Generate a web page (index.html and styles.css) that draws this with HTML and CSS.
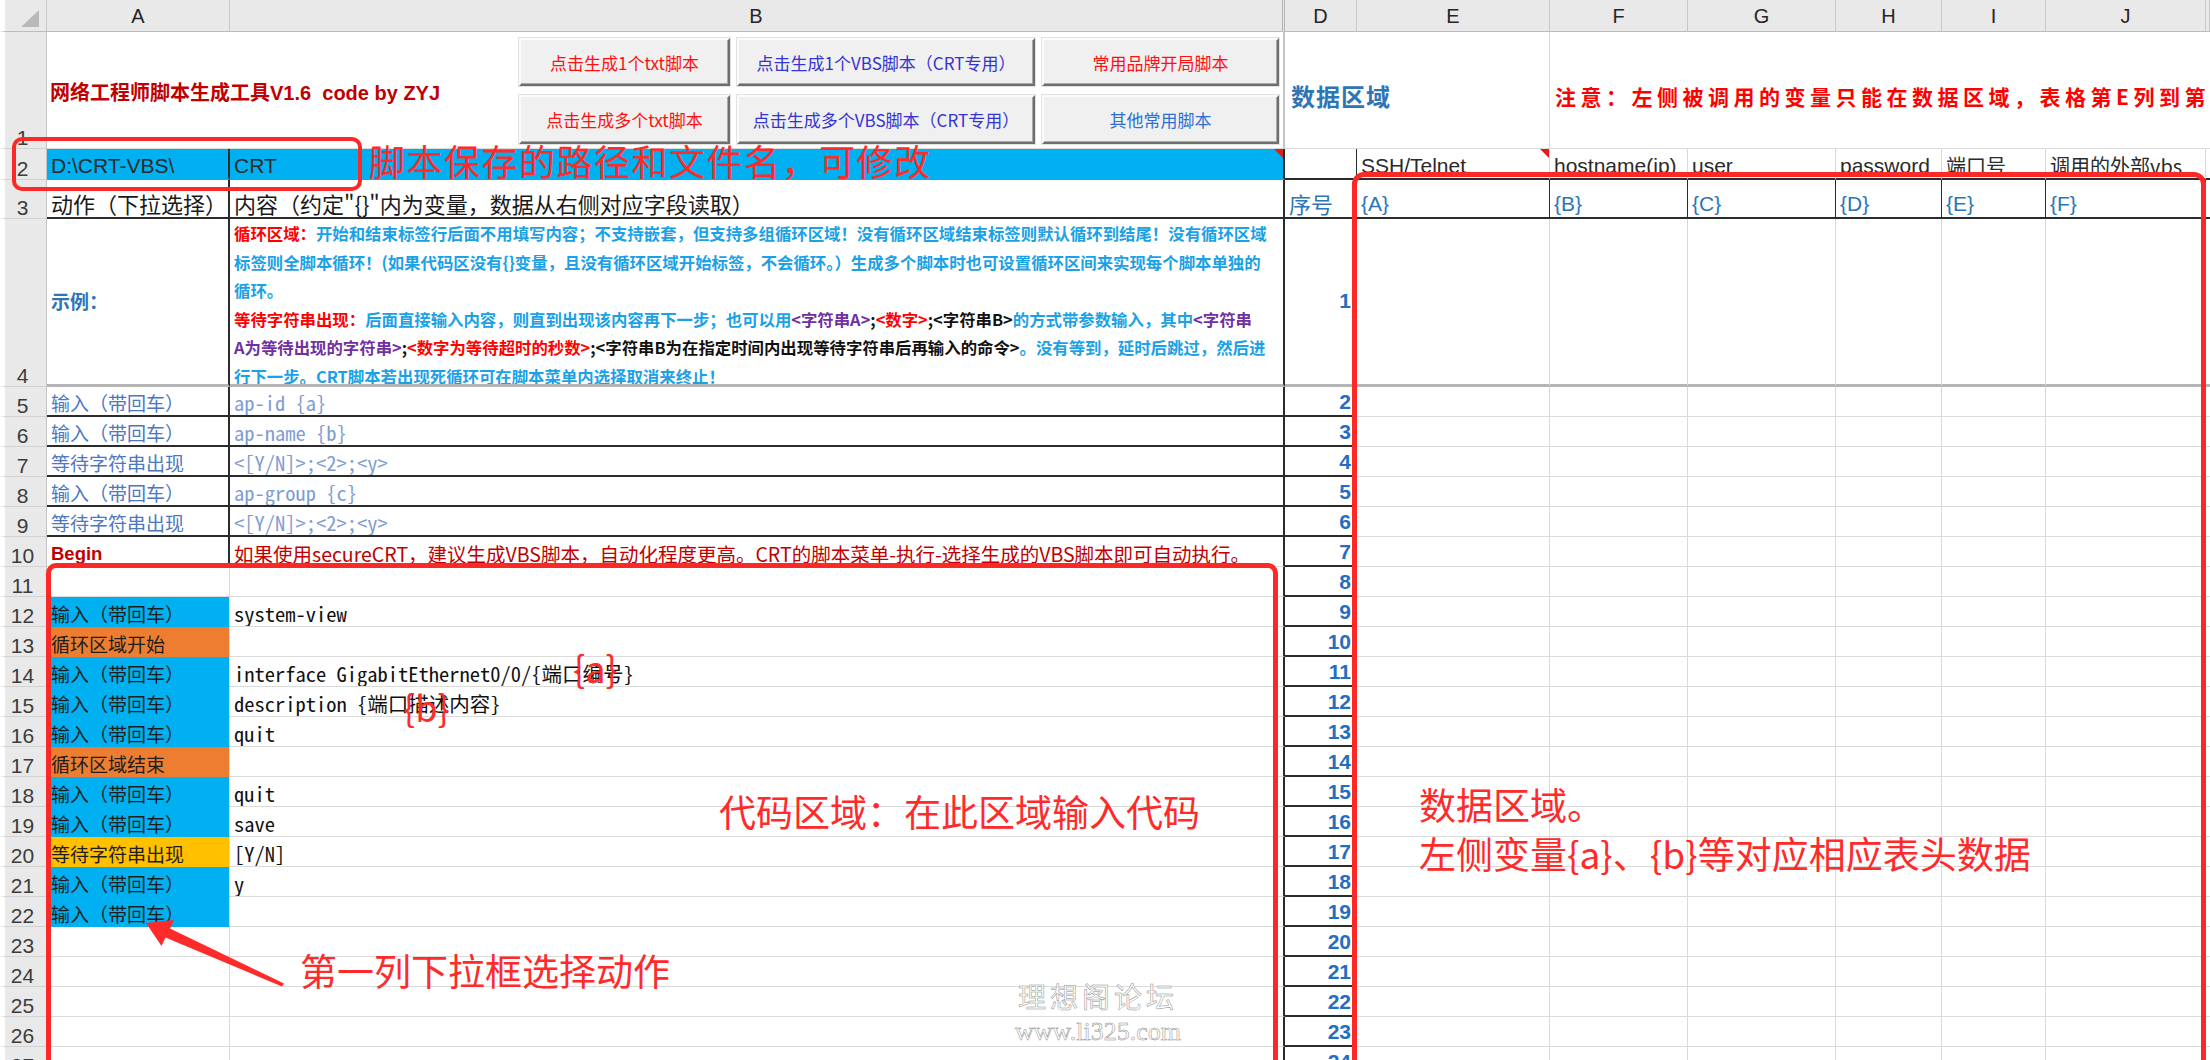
FILE: index.html
```html
<!DOCTYPE html>
<html lang="zh-CN">
<head>
<meta charset="utf-8">
<title>网络工程师脚本生成工具V1.6</title>
<link rel="stylesheet" href="styles.css">
</head>
<body>
<div class="sheet">
  <div class="row hdr">
    <div class="corner"></div><div>A</div><div class="hb">B</div><div>D</div><div>E</div><div>F</div><div>G</div><div>H</div><div>I</div><div>J</div><div></div>
  </div>

  <div class="row r1">
    <div class="rh">1</div>
    <div class="head-cell">
      <span class="title">网络工程师脚本生成工具V1.6&nbsp; code by ZYJ</span>
      <div class="btns">
        <div class="btn red">点击生成1个txt脚本</div>
        <div class="btn violet">点击生成1个VBS脚本（CRT专用）</div>
        <div class="btn red">常用品牌开局脚本</div>
        <div class="btn red">点击生成多个txt脚本</div>
        <div class="btn violet">点击生成多个VBS脚本（CRT专用）</div>
        <div class="btn blue-t">其他常用脚本</div>
      </div>
    </div>
    <div class="zone">数据区域</div>
    <div class="notice">注意：左侧被调用的变量只能在数据区域，表格第E列到第Z列之间，否则无法读取</div>
  </div>

  <div class="row r2">
    <div class="rh">2</div>
    <div class="a kr fill-blue">D:\CRT-VBS\</div>
    <div class="b fill-blue cm">CRT</div>
    <div class="d"></div>
    <div class="cm">SSH/Telnet</div><div>hostname(ip)</div><div>user</div><div>password</div><div class="cjk">端口号</div><div class="cjk">调用的外部vbs</div><div></div>
  </div>

  <div class="row r3">
    <div class="rh">3</div>
    <div class="a">动作（下拉选择）</div>
    <div class="b">内容（约定"{}"内为变量，数据从右侧对应字段读取）</div>
    <div class="d">序号</div>
    <div class="v">{A}</div><div class="v">{B}</div><div class="v">{C}</div><div class="v">{D}</div><div class="v">{E}</div><div class="v">{F}</div><div></div>
  </div>

  <div class="row r4">
    <div class="rh">4</div>
    <div class="a kr eg">示例：</div>
    <div class="b guide"><span class="g-red">循环区域：</span><span class="g-blue">开始和结束标签行后面不用填写内容；不支持嵌套，但支持多组循环区域！没有循环区域结束标签则默认循环到结尾！没有循环区域</span><br><span class="g-blue">标签则全脚本循环！(如果代码区没有{}变量，且没有循环区域开始标签，不会循环。）生成多个脚本时也可设置循环区间来实现每个脚本单独的</span><br><span class="g-blue">循环。</span><br><span class="g-red">等待字符串出现：</span><span class="g-blue">后面直接输入内容，则直到出现该内容再下一步；也可以用</span><span class="g-purple">&lt;字符串A&gt;</span><span class="g-black">;</span><span class="g-red">&lt;数字&gt;</span><span class="g-black">;&lt;字符串B&gt;</span><span class="g-blue">的方式带参数输入，其中</span><span class="g-purple">&lt;字符串</span><br><span class="g-purple">A为等待出现的字符串&gt;</span><span class="g-black">;</span><span class="g-red">&lt;数字为等待超时的秒数&gt;</span><span class="g-black">;&lt;字符串B为在指定时间内出现等待字符串后再输入的命令&gt;</span><span class="g-blue">。没有等到，延时后跳过，然后进</span><br><span class="g-blue">行下一步。CRT脚本若出现死循环可在脚本菜单内选择取消来终止！</span></div>
    <div class="d">1</div>
    <div></div><div></div><div></div><div></div><div></div><div></div><div></div>
  </div>

  <div class="row ex"><div class="rh">5</div><div class="a act">输入（带回车）</div><div class="b sample">ap-id {a}</div><div class="d">2</div><div></div><div></div><div></div><div></div><div></div><div></div><div></div></div>
  <div class="row ex"><div class="rh">6</div><div class="a act">输入（带回车）</div><div class="b sample">ap-name {b}</div><div class="d">3</div><div></div><div></div><div></div><div></div><div></div><div></div><div></div></div>
  <div class="row ex"><div class="rh">7</div><div class="a act">等待字符串出现</div><div class="b sample">&lt;[Y/N]&gt;;&lt;2&gt;;&lt;y&gt;</div><div class="d">4</div><div></div><div></div><div></div><div></div><div></div><div></div><div></div></div>
  <div class="row ex"><div class="rh">8</div><div class="a act">输入（带回车）</div><div class="b sample">ap-group {c}</div><div class="d">5</div><div></div><div></div><div></div><div></div><div></div><div></div><div></div></div>
  <div class="row ex"><div class="rh">9</div><div class="a act">等待字符串出现</div><div class="b sample">&lt;[Y/N]&gt;;&lt;2&gt;;&lt;y&gt;</div><div class="d">6</div><div></div><div></div><div></div><div></div><div></div><div></div><div></div></div>
  <div class="row"><div class="rh">10</div><div class="a kr begin">Begin</div><div class="b begin-note">如果使用secureCRT，建议生成VBS脚本，自动化程度更高。CRT的脚本菜单-执行-选择生成的VBS脚本即可自动执行。</div><div class="d">7</div><div></div><div></div><div></div><div></div><div></div><div></div><div></div></div>
  <div class="row"><div class="rh">11</div><div class="a"></div><div class="b"></div><div class="d">8</div><div></div><div></div><div></div><div></div><div></div><div></div><div></div></div>
  <div class="row"><div class="rh">12</div><div class="a fill-blue">输入（带回车）</div><div class="b code">system-view</div><div class="d">9</div><div></div><div></div><div></div><div></div><div></div><div></div><div></div></div>
  <div class="row"><div class="rh">13</div><div class="a fill-orange">循环区域开始</div><div class="b code"></div><div class="d">10</div><div></div><div></div><div></div><div></div><div></div><div></div><div></div></div>
  <div class="row"><div class="rh">14</div><div class="a fill-blue">输入（带回车）</div><div class="b code">interface GigabitEthernet0/0/{端口编号}</div><div class="d">11</div><div></div><div></div><div></div><div></div><div></div><div></div><div></div></div>
  <div class="row"><div class="rh">15</div><div class="a fill-blue">输入（带回车）</div><div class="b code">description {端口描述内容}</div><div class="d">12</div><div></div><div></div><div></div><div></div><div></div><div></div><div></div></div>
  <div class="row"><div class="rh">16</div><div class="a fill-blue">输入（带回车）</div><div class="b code">quit</div><div class="d">13</div><div></div><div></div><div></div><div></div><div></div><div></div><div></div></div>
  <div class="row"><div class="rh">17</div><div class="a fill-orange">循环区域结束</div><div class="b code"></div><div class="d">14</div><div></div><div></div><div></div><div></div><div></div><div></div><div></div></div>
  <div class="row"><div class="rh">18</div><div class="a fill-blue">输入（带回车）</div><div class="b code">quit</div><div class="d">15</div><div></div><div></div><div></div><div></div><div></div><div></div><div></div></div>
  <div class="row"><div class="rh">19</div><div class="a fill-blue">输入（带回车）</div><div class="b code">save</div><div class="d">16</div><div></div><div></div><div></div><div></div><div></div><div></div><div></div></div>
  <div class="row"><div class="rh">20</div><div class="a fill-gold">等待字符串出现</div><div class="b code">[Y/N]</div><div class="d">17</div><div></div><div></div><div></div><div></div><div></div><div></div><div></div></div>
  <div class="row"><div class="rh">21</div><div class="a fill-blue">输入（带回车）</div><div class="b code">y</div><div class="d">18</div><div></div><div></div><div></div><div></div><div></div><div></div><div></div></div>
  <div class="row"><div class="rh">22</div><div class="a fill-blue">输入（带回车）</div><div class="b code"></div><div class="d">19</div><div></div><div></div><div></div><div></div><div></div><div></div><div></div></div>
  <div class="row"><div class="rh">23</div><div class="a"></div><div class="b"></div><div class="d">20</div><div></div><div></div><div></div><div></div><div></div><div></div><div></div></div>
  <div class="row"><div class="rh">24</div><div class="a"></div><div class="b"></div><div class="d">21</div><div></div><div></div><div></div><div></div><div></div><div></div><div></div></div>
  <div class="row"><div class="rh">25</div><div class="a"></div><div class="b"></div><div class="d">22</div><div></div><div></div><div></div><div></div><div></div><div></div><div></div></div>
  <div class="row"><div class="rh">26</div><div class="a"></div><div class="b"></div><div class="d">23</div><div></div><div></div><div></div><div></div><div></div><div></div><div></div></div>
  <div class="row"><div class="rh">27</div><div class="a"></div><div class="b"></div><div class="d">24</div><div></div><div></div><div></div><div></div><div></div><div></div><div></div></div>
</div>

<div class="marks">
  <div class="frame path"></div>
  <div class="frame code-area"></div>
  <div class="frame data-area"></div>
  <span class="tag path-tip">脚本保存的路径和文件名，可修改</span>
  <span class="tag var-a">{a}</span>
  <span class="tag var-b">{b}</span>
  <span class="tag code-tip">代码区域：在此区域输入代码</span>
  <span class="tag data-tip">数据区域。<br>左侧变量{a}、{b}等对应相应表头数据</span>
  <span class="tag col-tip">第一列下拉框选择动作</span>
  <svg class="arrow" width="2210" height="1060" viewBox="0 0 2210 1060">
    <polygon points="146,923 174,920 170,928.5 284,983.5 282,986.5 165.5,937.5 161.5,946"/>
  </svg>
  <div class="wm"><span class="wm-cn">理想阁论坛</span><span class="wm-en">www.li325.com</span></div>
</div>
</body>
</html>
```

FILE: styles.css
```css
* { box-sizing: border-box; margin: 0; padding: 0; }

html, body {
  width: 2210px;
  height: 1060px;
  overflow: hidden;
  background: #fff;
}

body {
  position: relative;
  font-family: "Liberation Sans", "Noto Sans CJK SC", sans-serif;
  color: #1e1e1e;
}

/* ---------- worksheet grid ---------- */
.sheet { width: 2210px; }

.row {
  display: grid;
  grid-template-columns: 47px 183px 1055px 72px 193px 138px 148px 106px 104px 160px 1fr;
  height: 30px;
}

.row > div {
  position: relative;
  display: flex;
  align-items: flex-end;
  min-width: 0;
  padding: 0 4px 3px;
  overflow: hidden;
  white-space: nowrap;
  line-height: 1;
  font-family: "Noto Sans CJK SC", "Liberation Sans", sans-serif;
  font-size: 19px;
  border-right: 1px solid #dadada;
  border-bottom: 1px solid #dadada;
}

/* column letters */
.hdr { height: 32px; }
.hdr > div {
  align-items: center;
  justify-content: center;
  padding: 0;
  background: #e9e9e9;
  border-right: 1px solid #c8c8c8;
  border-bottom: 1px solid #bcbcbc;
  font-family: "Liberation Sans", sans-serif;
  font-size: 20px;
  color: #262626;
}
.hdr > .hb { border-right: 3px double #b4b4b4; }
.hdr > .corner { border-left: 5px solid #fff; }
.hdr > .corner::after {
  content: "";
  position: absolute;
  right: 7px;
  bottom: 4px;
  border-left: 18px solid transparent;
  border-bottom: 17px solid #b9b9b9;
}

/* row numbers */
.row > .rh {
  justify-content: center;
  padding: 0 6px 0 0;
  background: #e9e9e9;
  border-left: 5px solid #fff;
  border-right: 1px solid #c4c4c4;
  border-bottom: 1px solid #d2d2d2;
  font-family: "Liberation Sans", sans-serif;
  font-size: 21px;
  color: #3c3c3c;
}

/* column specific */
.row > .b { border-right: 2px solid #2b2b2b; }
.row > .d {
  justify-content: flex-end;
  padding: 0 5px 3px 4px;
  border-right: 1px solid #2b2b2b;
  border-bottom: 2px solid #2b2b2b;
  font-family: "Liberation Sans", sans-serif;
  font-weight: 700;
  font-size: 21px;
  color: #1f6fc2;
}
.row > .kr { border-right: 2px solid #2b2b2b; }

.row > .fill-blue { background: #00b0f0; border-bottom-color: #00b0f0; }
.row > .fill-orange { background: #ed7d31; border-bottom-color: #ed7d31; }
.row > .fill-gold { background: #ffc000; border-bottom-color: #ffc000; }

/* comment marker in the corner of a cell */
.cm::after {
  content: "";
  position: absolute;
  top: 0;
  right: 0;
  border-top: 9px solid #e41b1b;
  border-left: 9px solid transparent;
}

/* ---------- row 1 ---------- */
.r1 { height: 117px; }
.row > .head-cell {
  grid-column: span 2;
  align-items: center;
  padding: 6px 4px 0 3px;
  border-right: 2px solid #c4c4c4;
}
.title {
  font-family: "Liberation Sans", "Noto Sans CJK SC", sans-serif;
  font-weight: 700;
  font-size: 20px;
  color: #c00000;
}
.btns {
  display: grid;
  grid-template-columns: 211px 298px 237px;
  grid-template-rows: 48px 49px;
  gap: 9px 7px;
  margin-left: auto;
  align-self: flex-start;
}
.btn {
  display: flex;
  align-items: center;
  justify-content: center;
  background: #f0f0f0;
  border: 2px solid;
  border-color: #fbfbfb #6e6e6e #6e6e6e #fbfbfb;
  box-shadow: inset -1px -1px 0 #a9a9a9, 0 0 0 1px #e2e2e2;
  font-family: "Noto Sans CJK SC", sans-serif;
  font-size: 17px;
}
.btn.red { color: #ff1010; }
.btn.violet { color: #3434d2; }
.btn.blue-t { color: #2f6fd2; }

.row > .zone {
  grid-column: span 2;
  align-items: center;
  padding: 11px 0 0 6px;
  font-weight: 700;
  font-size: 24px;
  letter-spacing: 1px;
  color: #2e75b6;
}
.row > .notice {
  grid-column: span 6;
  align-items: center;
  padding: 13px 0 0 5px;
  border-right: 0;
  font-weight: 700;
  font-size: 21px;
  letter-spacing: 4.5px;
  color: #ff0000;
}

/* ---------- row 2 ---------- */
.r2 { height: 31px; }
.r2 > div {
  padding-bottom: 2px;
  border-bottom: 2px solid #2b2b2b;
  font-family: "Liberation Sans", "Noto Sans CJK SC", sans-serif;
  font-size: 21px;
  color: #2a2a2a;
}
.r2 > .cjk { font-family: "Noto Sans CJK SC", sans-serif; font-size: 20px; }

/* ---------- row 3 ---------- */
.r3 { height: 39px; }
.r3 > div {
  padding-bottom: 3px;
  border-right-color: #2b2b2b;
  border-bottom: 2px solid #2b2b2b;
  font-size: 22px;
  color: #1a1a1a;
}
.r3 > .a { border-right: 2px solid #2b2b2b; }
.row.r3 > .d {
  justify-content: flex-start;
  font-family: "Noto Sans CJK SC", sans-serif;
  font-weight: 400;
  font-size: 22px;
  color: #2e75b6;
}
.r3 > .v {
  font-family: "Liberation Sans", sans-serif;
  font-size: 21px;
  color: #2e75b6;
}

/* ---------- row 4 ---------- */
.r4 { height: 168px; }
.r4 > div { border-bottom: 3px solid #b5b5b5; }
.row.r4 > .d { align-items: center; border-bottom: 3px solid #b5b5b5; }
.row > .eg {
  align-items: center;
  font-weight: 700;
  font-size: 19px;
  color: #2e75b6;
}
.row > .guide {
  display: block;
  padding: 0 4px;
  font-weight: 700;
  font-size: 16.4px;
  line-height: 28.5px;
}
.g-red { color: #ff0000; }
.g-blue { color: #1ba1e6; }
.g-purple { color: #7030a0; }
.g-black { color: #111; }

/* ---------- sample rows ---------- */
.ex > .a { border-right: 2px solid #2b2b2b; border-bottom: 2px solid #2b2b2b; }
.ex > .b { border-bottom: 2px solid #2b2b2b; }
.row > .act { color: #4d77bf; }
.row > .sample {
  font-family: "Noto Sans Mono CJK SC", "Liberation Mono", monospace;
  font-size: 20.5px;
  color: #7f9dd3;
}
.row > .code {
  font-family: "Noto Sans Mono CJK SC", "Liberation Mono", monospace;
  font-size: 20.5px;
  color: #111;
}
.row > .begin {
  font-family: "Liberation Sans", sans-serif;
  font-weight: 700;
  font-size: 18.5px;
  color: #c00000;
}
.row > .begin-note {
  font-size: 19.5px;
  color: #c00000;
}

/* ---------- callouts drawn over the sheet ---------- */
.marks {
  position: absolute;
  left: 0;
  top: 0;
  width: 2210px;
  height: 1060px;
  pointer-events: none;
  font-family: "Noto Sans CJK SC", sans-serif;
  color: #ff2a2a;
}
.frame {
  position: absolute;
  border: 4px solid #fb2a26;
  border-radius: 10px;
}
.frame.path { left: 12px; top: 137px; width: 350px; height: 54px; }
.frame.code-area { left: 46px; top: 563px; width: 1232px; height: 560px; border-width: 5px; }
.frame.data-area { left: 1352px; top: 172px; width: 854px; height: 960px; border-width: 5px; border-radius: 12px; }

.tag {
  position: absolute;
  line-height: 1;
  white-space: nowrap;
}
.path-tip { left: 369px; top: 142px; font-size: 36px; letter-spacing: 1.5px; }
.var-a { left: 573px; top: 649px; font-size: 36px; }
.var-b { left: 403px; top: 688px; font-size: 36px; }
.code-tip { left: 719px; top: 793px; font-size: 37px; }
.data-tip { left: 1419px; top: 786px; font-size: 37px; line-height: 49px; margin-top: -6px; }
.col-tip { left: 300px; top: 952px; font-size: 37px; }

.arrow { position: absolute; left: 0; top: 0; }
.arrow polygon { fill: #ff2a2a; }

/* hollow forum mark */
.wm {
  position: absolute;
  left: 1013px;
  top: 982px;
  width: 170px;
  text-align: center;
  color: #fff;
  -webkit-text-stroke: 0.5px #8c8c8c;
}
.wm-cn { display: block; font-size: 28px; line-height: 1; letter-spacing: 4px; }
.wm-en {
  display: block;
  margin-top: 9px;
  font-family: "Liberation Serif", serif;
  font-size: 26px;
  line-height: 1;
}
```
